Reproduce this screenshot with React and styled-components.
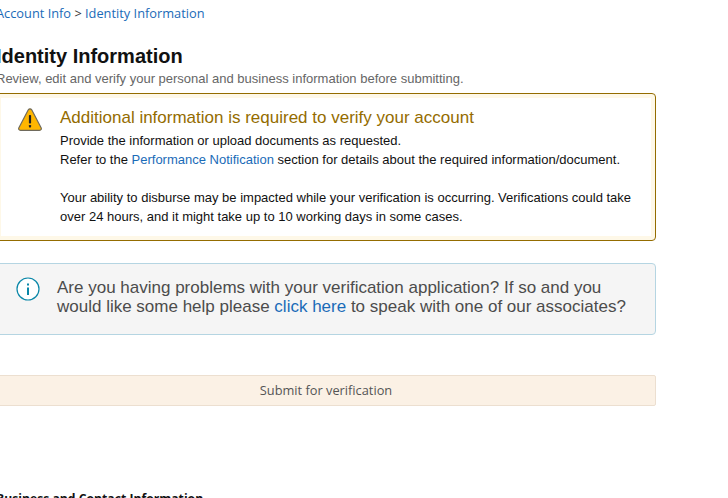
import React from "react";
import styled, { createGlobalStyle } from "styled-components";

const GlobalStyle = createGlobalStyle`
  html, body {
    margin: 0;
    padding: 0;
    background: #fff;
    overflow: hidden;
  }
`;

const Page = styled.div`
  width: 660px;
  height: 498px;
  margin-left: -4px;
  overflow: hidden;
  font-family: "Liberation Sans", Arial, sans-serif;
  color: #111;
`;

const Breadcrumb = styled.div`
  padding-top: 5px;
  height: 20px;
  line-height: 16px;
  font-family: "Open Sans", sans-serif;
  font-size: 12.8px;
  color: #333;
`;

const Crumb = styled.a`
  color: #1a6bb8;
`;

const Title = styled.h1`
  margin: 18px 0 0;
  font-size: 20px;
  line-height: 26px;
  font-weight: 700;
  color: #111;
`;

const Subtitle = styled.p`
  margin: 1px 0 0;
  font-size: 13px;
  line-height: 18px;
  color: #666;
  white-space: nowrap;
`;

const WarningBox = styled.section`
  display: flex;
  margin-top: 5px;
  height: 148px;
  box-sizing: border-box;
  border: 1px solid #946c00;
  border-radius: 4px;
  box-shadow: inset 0 0 0 4px #fef8e8;
  padding: 12px 18px 0 21px;
`;

const WarningIcon = styled.svg`
  flex: none;
  width: 24px;
  height: 23px;
  margin: 2px 18px 0 0;
`;

const WarningBody = styled.div`
  font-size: 13px;
  line-height: 19px;
  color: #111;
`;

const WarningTitle = styled.h4`
  margin: 0 0 2px;
  font-size: 17px;
  line-height: 23px;
  font-weight: 400;
  color: #946c00;
`;

const Line = styled.div`
  margin-bottom: ${(p) => (p.$gap ? "19px" : "0")};
`;

const BodyLink = styled.a`
  color: #1a6bb8;
`;

const InfoBox = styled.section`
  display: flex;
  margin-top: 22px;
  height: 72px;
  box-sizing: border-box;
  border: 1px solid #b5d5e2;
  border-radius: 4px;
  background: #f5f5f5;
  padding: 13px 18px 0 19px;
`;

const InfoIcon = styled.svg`
  flex: none;
  width: 24px;
  height: 24px;
  margin: 0 17px 0 0;
`;

const InfoText = styled.div`
  margin-top: 1px;
  font-size: 17px;
  line-height: 19px;
  color: #4c4c4c;
`;

const SubmitBar = styled.button`
  display: block;
  width: 100%;
  margin-top: 40px;
  height: 31px;
  box-sizing: border-box;
  border: 1px solid #ecdfd0;
  border-radius: 2px;
  background: #fbf1e5;
  font-family: "Open Sans", sans-serif;
  font-size: 12.8px;
  color: #555;
  padding: 0 0 2px;
`;

const SectionHeading = styled.h2`
  margin: 83px 0 0;
  font-family: "Open Sans", sans-serif;
  font-size: 12.2px;
  line-height: 20px;
  font-weight: 700;
  color: #111;
`;

export default function App() {
  return (
    <>
      <GlobalStyle />
      <Page>
        <Breadcrumb>
          <Crumb>Account Info</Crumb> &gt; <Crumb>Identity Information</Crumb>
        </Breadcrumb>
        <Title>Identity Information</Title>
        <Subtitle>
          Review, edit and verify your personal and business information before submitting.
        </Subtitle>
        <WarningBox>
          <WarningIcon viewBox="0 0 24 23">
            <path
              d="M12 .8c-.8 0-1.3.4-1.7 1L.9 19.7c-.7 1.4.1 2.6 1.6 2.6h19c1.500 0 2.300-1.200 1.600-2.600L13.700 1.800c-.4-.6-.9-1-1.700-1z"
              fill="#ffb600"
              stroke="#6f6a5c"
              strokeWidth="1.2"
            />
            <rect x="10.900" y="7" width="2.200" height="8.500" rx=".8" fill="#222" />
            <rect x="10.900" y="17" width="2.200" height="2.400" rx=".6" fill="#222" />
          </WarningIcon>
          <WarningBody>
            <WarningTitle>Additional information is required to verify your account</WarningTitle>
            <Line>Provide the information or upload documents as requested.</Line>
            <Line $gap>
              Refer to the <BodyLink>Performance Notification</BodyLink> section for details about
              the required information/document.
            </Line>
            <Line>
              Your ability to disburse may be impacted while your verification is occurring.
              Verifications could take over 24 hours, and it might take up to 10 working days in
              some cases.
            </Line>
          </WarningBody>
        </WarningBox>
        <InfoBox>
          <InfoIcon viewBox="0 0 24 24">
            <circle cx="12" cy="12" r="11" fill="#fff" stroke="#0a87a8" strokeWidth="1.2" />
            <rect x="11" y="10.500" width="2" height="7.500" fill="#0a87a8" />
            <rect x="11" y="6.500" width="2" height="2" fill="#0a87a8" />
          </InfoIcon>
          <InfoText>
            Are you having problems with your verification application? If so and you would like
            some help please <BodyLink>click here</BodyLink> to speak with one of our associates?
          </InfoText>
        </InfoBox>
        <SubmitBar>Submit for verification</SubmitBar>
        <SectionHeading>Business and Contact Information</SectionHeading>
      </Page>
    </>
  );
}
